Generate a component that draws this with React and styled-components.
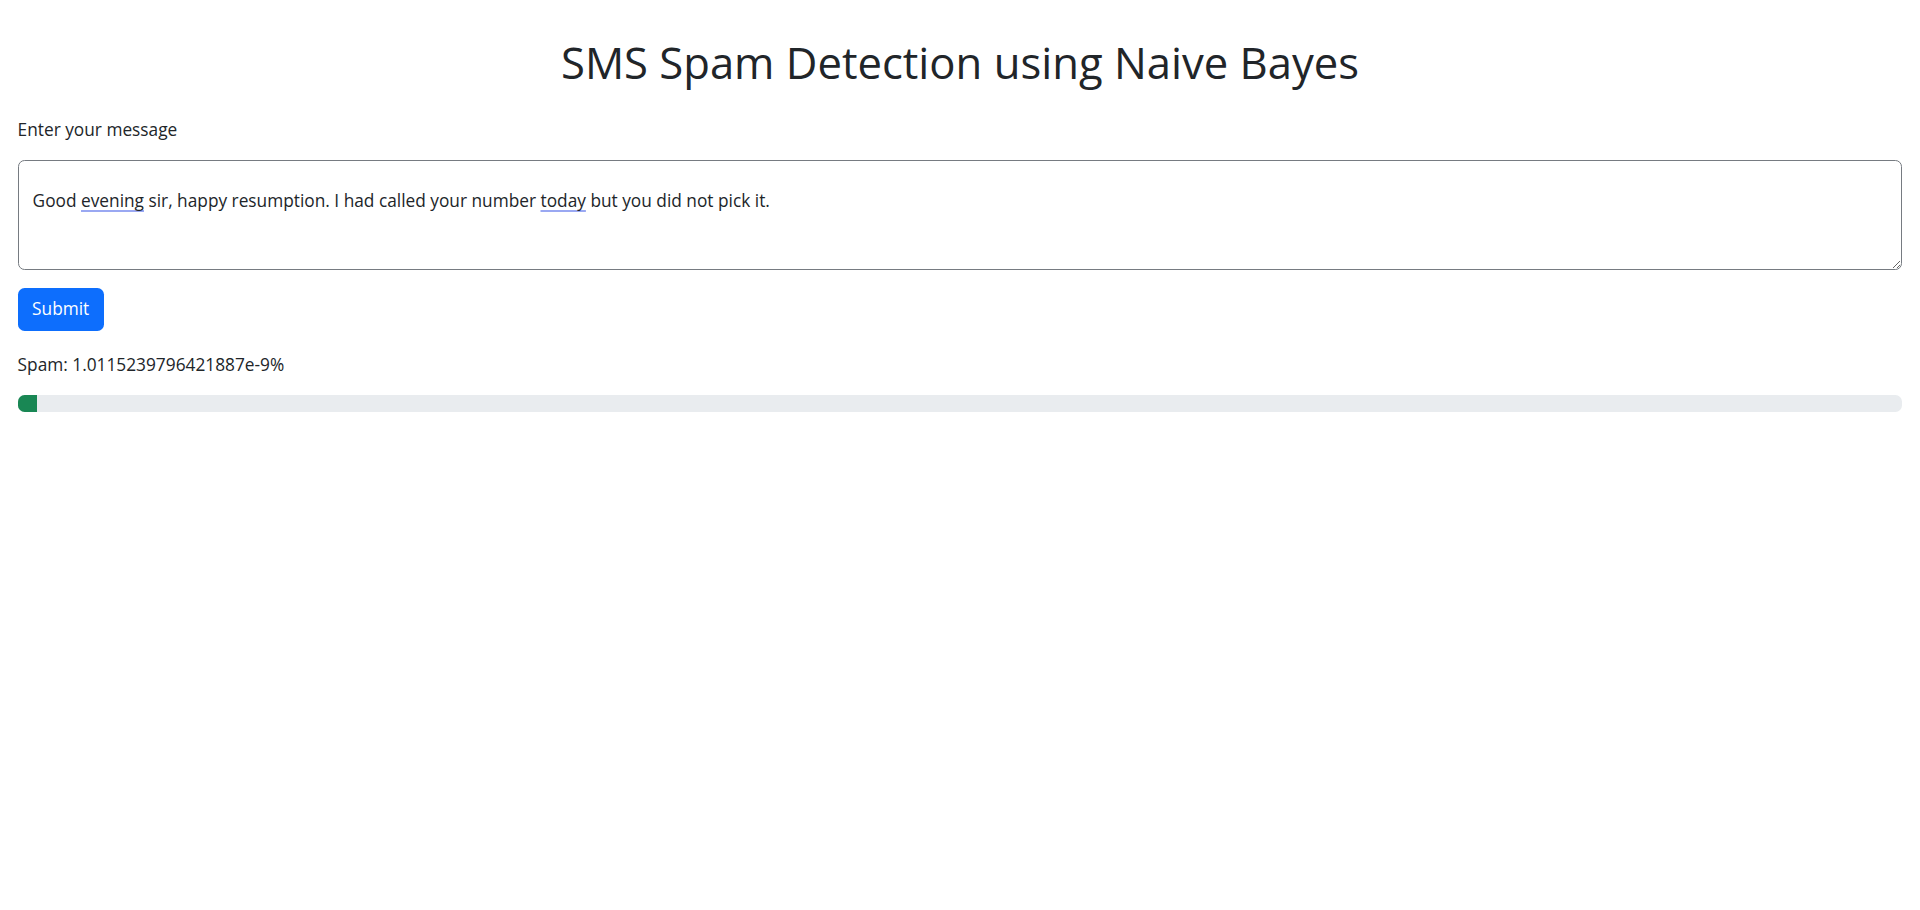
import React from 'react';
import styled, { createGlobalStyle } from 'styled-components';

const GlobalStyle = createGlobalStyle`
    body {
        margin: 0;
        background: #fff;
        color: #212529;
        font-family: 'Open Sans', 'Noto Sans', sans-serif;
        font-size: 17.3px;
        line-height: 26.4px;
    }
    * { box-sizing: border-box; }
`;

const Page = styled.main`
    display: flex;
    flex-direction: column;
    padding: 0 17.6px;
`;

const Title = styled.h1`
    margin: 36px 0 28px;
    text-align: center;
    font-size: 43.6px;
    font-weight: 400;
    line-height: 52.8px;
`;

const Label = styled.label`
    display: block;
    margin-bottom: 16.6px;
`;

const MessageBox = styled.div`
    height: 110px;
    padding: 27px 14px 6px;
    border: 1px solid #767b81;
    border-radius: 6.6px;
    overflow: auto;
    resize: vertical;
    outline: none;
    white-space: pre-wrap;
`;

const Misspelt = styled.span`
    text-decoration: underline;
    text-decoration-color: #9aa8f2;
    text-decoration-thickness: 2px;
    text-underline-offset: 3px;
    text-decoration-skip-ink: none;
`;

const SubmitButton = styled.button`
    align-self: flex-start;
    margin-top: 18px;
    height: 43px;
    padding: 0 14.5px;
    border: none;
    border-radius: 6.6px;
    background: #0d6efd;
    color: #fff;
    font: inherit;
    cursor: pointer;
`;

const Result = styled.p`
    margin: 21.7px 0 16px;
`;

const Track = styled.div`
    height: 17.6px;
    border-radius: 6.6px;
    background: #e9ecef;
    overflow: hidden;
    display: flex;
`;

const Fill = styled.div`
    background: #198754;
    min-width: 19px;
`;

const spam = 1.0115239796421887e-9;

export default function App() {
    return (
        <>
            <GlobalStyle />
            <Page>
                <Title>SMS Spam Detection using Naive Bayes</Title>
                <Label htmlFor="message">Enter your message</Label>
                <MessageBox id="message" role="textbox" contentEditable suppressContentEditableWarning spellCheck={false}>
                    Good <Misspelt>evening</Misspelt> sir, happy resumption. I had called your number <Misspelt>today</Misspelt> but you did not pick it.
                </MessageBox>
                <SubmitButton type="button">Submit</SubmitButton>
                <Result>Spam: {spam}%</Result>
                <Track>
                    <Fill style={{ width: `${spam}%` }} />
                </Track>
            </Page>
        </>
    );
}
